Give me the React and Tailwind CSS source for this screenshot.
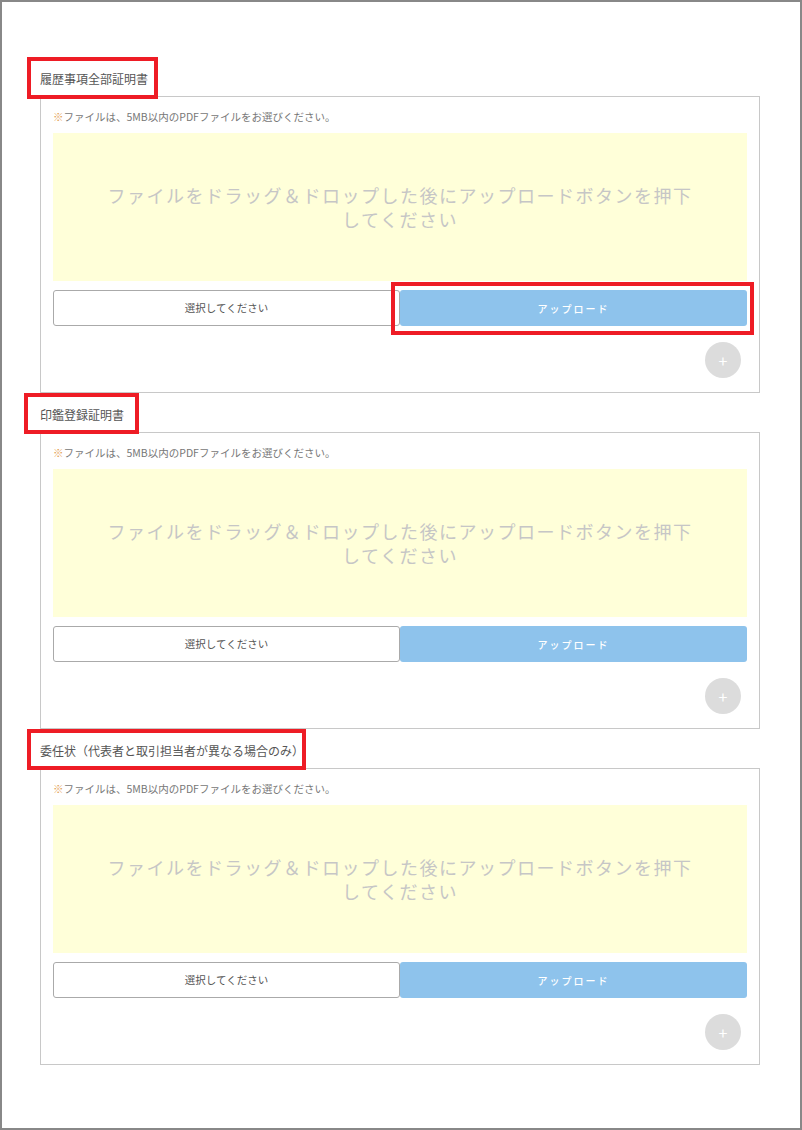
const sections = [
  { title: "履歴事項全部証明書", box: "-left-[13px] -top-[13px] -right-[10px] -bottom-[11px]", highlightUpload: true },
  { title: "印鑑登録証明書", box: "-left-[16px] -top-[13px] -right-[15px] -bottom-[10px]" },
  { title: "委任状（代表者と取引担当者が異なる場合のみ）", box: "-left-[13px] -top-[13px] -right-[2px] -bottom-[10px]" },
];

function RedBox({ className }) {
  return <span className={`pointer-events-none absolute border-4 border-[#ee1c25] ${className}`} />;
}

function UploadSection({ title, box, highlightUpload }) {
  return (
    <section className="mb-[13px]">
      <div className="mb-[8px] flex">
        <span className="relative block text-[12px] leading-[18px] text-[#555]">
          {title}
          {box ? <RedBox className={box} /> : null}
        </span>
      </div>
      <div className="border border-[#c8c8c8] px-[12px] pt-[13px] pb-[14px]">
        <p className="text-[10.5px] leading-[14px] text-[#777]">
          <span className="text-[#e39a4c]">※</span>ファイルは、5MB以内のPDFファイルをお選びください。
        </p>
        <div className="mt-[9px] flex h-[148px] items-center justify-center bg-[#ffffd9] px-[50px] text-center text-[18px] leading-[24px] tracking-[1.5px] text-[#c6c6c6]">
          ファイルをドラッグ＆ドロップした後にアップロードボタンを押下してください
        </div>
        <div className="mt-[9px] grid grid-cols-2">
          <button className="h-[36px] rounded-[3px] border border-[#aaa] bg-white text-[10.5px] text-[#555]">
            選択してください
          </button>
          <div className="relative">
            <button className="h-[36px] w-full rounded-[3px] bg-[#8ec3ec] text-[10px] font-medium tracking-[2px] text-white">
              アップロード
            </button>
            {highlightUpload ? <RedBox className="-left-[9px] -top-[8px] -right-[7px] -bottom-[9px]" /> : null}
          </div>
        </div>
        <div className="mt-[16px] flex justify-end pr-[6px]">
          <button className="flex h-[36px] w-[36px] items-center justify-center rounded-full bg-[#dcdcdc] text-[16px] leading-none text-white">
            +
          </button>
        </div>
      </div>
    </section>
  );
}

export default function App() {
  return (
    <div
      className="box-border h-[1130px] w-[802px] border-2 border-[#888] bg-white pt-[68px] pl-[38px] pr-[40px]"
      style={{ fontFamily: '"Noto Sans CJK JP", "Noto Sans", sans-serif' }}
    >
      {sections.map((s) => (
        <UploadSection key={s.title} {...s} />
      ))}
    </div>
  );
}
